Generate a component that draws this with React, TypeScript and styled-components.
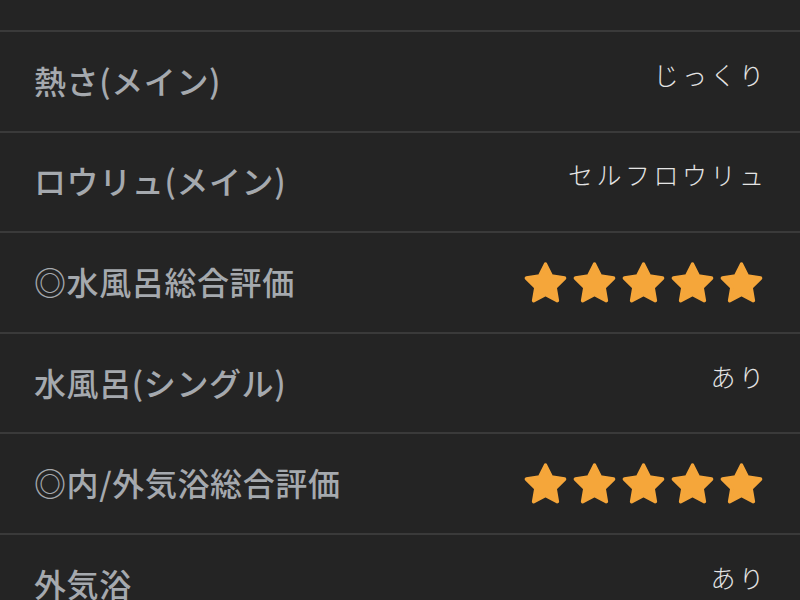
import React from "react";
import styled, { createGlobalStyle } from "styled-components";

const Global = createGlobalStyle`
  html, body { margin: 0; padding: 0; background: #242424; }
  body { font-family: "Noto Sans CJK JP", "Noto Sans", sans-serif; }
`;

const List = styled.div`
  width: 800px;
  height: 600px;
  overflow: hidden;
  background: #242424;
  display: flex;
  flex-direction: column;
`;

const TopStub = styled.div`
  flex: none;
  height: 32px;
  box-sizing: border-box;
  border-bottom: 2px solid #3a3a3a;
`;

const Row = styled.div`
  flex: none;
  height: 100.6px;
  box-sizing: border-box;
  border-bottom: 2px solid #3a3a3a;
  display: flex;
  align-items: center;
  justify-content: space-between;
  padding: 0 36px 0 34px;
`;

const Label = styled.div`
  font-size: 32px;
  font-weight: 500;
  color: #a5a9ae;
  letter-spacing: 0.6px;
  line-height: 1;
  padding-bottom: 3px;
`;

const Value = styled.div`
  font-size: 25px;
  font-weight: 300;
  color: #e4e4e4;
  letter-spacing: 3.5px;
  margin-right: -3.5px;
  line-height: 1;
  padding-bottom: 14px;
`;

const Stars = styled.div`
  display: flex;
  gap: 6px;
  margin-right: 1px;
`;

const StarSvg = styled.svg`
  width: 43px;
  height: 43px;
  display: block;
`;

const Star = () => (
  <StarSvg viewBox="0 0 24 24">
    <path
      d="M12 1.8L15.3 8.4 22.6 9.55 17.35 14.75 18.6 22.1 12 18.7 5.4 22.1 6.65 14.75 1.4 9.55 8.7 8.4z"
      fill="#f5a63a"
      stroke="#f5a63a"
      strokeWidth="2"
      strokeLinejoin="round"
    />
  </StarSvg>
);

type Item = { label: string; value?: string; stars?: number };

const items: Item[] = [
  { label: "熱さ(メイン)", value: "じっくり" },
  { label: "ロウリュ(メイン)", value: "セルフロウリュ" },
  { label: "◎水風呂総合評価", stars: 5 },
  { label: "水風呂(シングル)", value: "あり" },
  { label: "◎内/外気浴総合評価", stars: 5 },
  { label: "外気浴", value: "あり" },
];

export default function App() {
  return (
    <>
      <Global />
      <List>
        <TopStub />
        {items.map((it, i) => (
          <Row key={i}>
            <Label>{it.label}</Label>
            {it.stars ? (
              <Stars>
                {Array.from({ length: it.stars }).map((_, j) => (
                  <Star key={j} />
                ))}
              </Stars>
            ) : (
              <Value>{it.value}</Value>
            )}
          </Row>
        ))}
      </List>
    </>
  );
}
